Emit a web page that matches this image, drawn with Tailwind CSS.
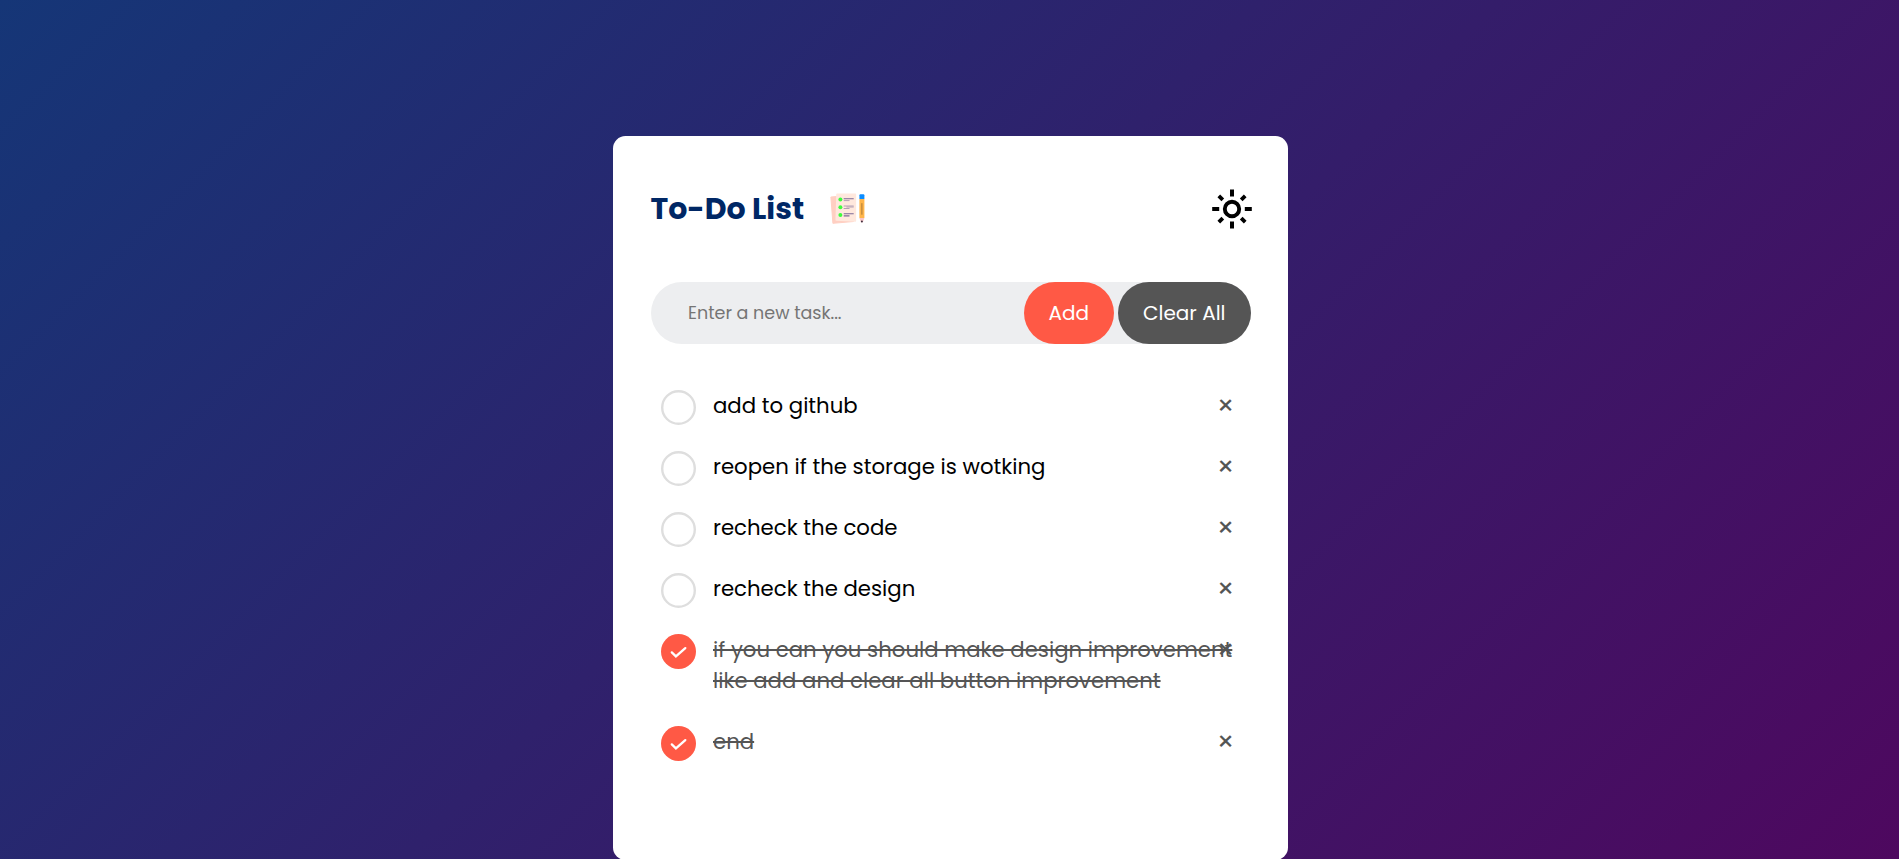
<!DOCTYPE html>
<html lang="en">
<head>
<meta charset="utf-8">
<title>To-Do List</title>
<script src="https://cdn.jsdelivr.net/npm/@tailwindcss/browser@4"></script>
</head>
<body class="h-[859px] overflow-hidden bg-[linear-gradient(135deg,#153677,#4e085f)] pl-[2px] font-[Poppins,Inter,sans-serif]">
<main class="mx-auto mt-[136px] h-[724px] w-[675px] rounded-[12.5px] bg-white px-[37.5px] pt-[50px] pb-[88px]">
  <header class="flex h-[45px] items-center">
    <h1 class="text-[30px] leading-[45px] font-bold text-[#002765]">To-Do List</h1>
    <svg class="mb-[5px] ml-[25px] h-[38px] w-[38px]" viewBox="0 0 38 38">
      <path d="M1.9 10 20 8.5 24.5 34.5 3.9 36.3Z" fill="#ffcfc2" stroke="#ffcfc2" stroke-width="1" stroke-linejoin="round"/>
      <path d="M8 7.2H26.4V34L7.2 33Z" fill="#ffe8dd" stroke="#ffe8dd" stroke-width="1.5" stroke-linejoin="round"/>
      <g fill="#3dfc3d"><circle cx="11.4" cy="12.6" r="2"/><circle cx="11.4" cy="20.2" r="2"/><circle cx="11.4" cy="27.9" r="2"/></g>
      <path d="M14.7 11.7h10M14.7 26.8h10M14.7 28.9h5.8" stroke="#7d6a96" stroke-width="1.1"/>
      <path d="M14.7 13.6h5.8M14.7 19h10M14.7 21.5h5.8M17.4 20h7.3" stroke="#b3a0b4" stroke-width="1"/>
      <path d="M30.4 12h5v19h-5Z" fill="#ffb54a"/>
      <path d="M30.4 8.3a1 1 0 0 1 1-1h3a1 1 0 0 1 1 1v3.8h-5Z" fill="#0a8cff"/>
      <path d="M32.9 16.2v11.5" stroke="#a87838" stroke-width="1"/>
      <path d="M30.4 31h5l-1.5 4.2h-2Z" fill="#f9c6c8"/>
      <circle cx="32.9" cy="34.6" r="1" fill="#403040"/>
    </svg>
    <svg class="-mr-px ml-auto h-10 w-10" viewBox="-20 -20 40 40" fill="none" stroke="#000">
      <circle r="7.2" stroke-width="3.9"/>
      <path stroke-width="4" d="M0-19.5v7M0 12.5v7M-19.8 0h7M12.8 0h7"/>
      <path stroke-width="3.8" d="M-13.2-13.2l4 4M13.2-13.2l-4 4M-13.2 13.2l4-4M13.2 13.2l-4-4"/>
    </svg>
  </header>
  <div class="mt-[51px] flex h-[62px] items-center rounded-full bg-[#edeef0] pl-[37.5px] text-xl text-white">
    <span class="flex-1 text-[17.5px] text-[#757575]">Enter a new task...</span>
    <button class="h-full rounded-full bg-[#ff5945] px-[25px]">Add</button>
    <button class="ml-1 h-full rounded-full bg-[#555] px-[25px]">Clear All</button>
  </div>
  <ul class="mt-[31px] text-[21.25px] leading-[31px] text-black">
    <li class="relative py-[15px] pr-[12px] pl-[62.5px]"><svg class="absolute top-[15px] left-[10px] size-[35px]" viewBox="0 0 35 35"><circle cx="17.5" cy="17.5" r="16.3" fill="none" stroke="#dedede" stroke-width="2.4"/></svg>add to github<b class="absolute top-[6px] right-0 w-[50px] text-center text-[27.5px] leading-[50px] font-normal text-[#555]">×</b></li>
    <li class="relative py-[15px] pr-[12px] pl-[62.5px]"><svg class="absolute top-[15px] left-[10px] size-[35px]" viewBox="0 0 35 35"><circle cx="17.5" cy="17.5" r="16.3" fill="none" stroke="#dedede" stroke-width="2.4"/></svg>reopen if the storage is wotking<b class="absolute top-[6px] right-0 w-[50px] text-center text-[27.5px] leading-[50px] font-normal text-[#555]">×</b></li>
    <li class="relative py-[15px] pr-[12px] pl-[62.5px]"><svg class="absolute top-[15px] left-[10px] size-[35px]" viewBox="0 0 35 35"><circle cx="17.5" cy="17.5" r="16.3" fill="none" stroke="#dedede" stroke-width="2.4"/></svg>recheck the code<b class="absolute top-[6px] right-0 w-[50px] text-center text-[27.5px] leading-[50px] font-normal text-[#555]">×</b></li>
    <li class="relative py-[15px] pr-[12px] pl-[62.5px]"><svg class="absolute top-[15px] left-[10px] size-[35px]" viewBox="0 0 35 35"><circle cx="17.5" cy="17.5" r="16.3" fill="none" stroke="#dedede" stroke-width="2.4"/></svg>recheck the design<b class="absolute top-[6px] right-0 w-[50px] text-center text-[27.5px] leading-[50px] font-normal text-[#555]">×</b></li>
    <li class="relative py-[15px] pr-[12px] pl-[62.5px] text-[#555]"><svg class="absolute top-[15px] left-[10px] size-[35px]" viewBox="0 0 35 35"><circle cx="17.5" cy="17.5" r="17.5" fill="#ff5945"/><path d="M10.8 18.4l4.1 4 9.4-8.3" fill="none" stroke="#fff" stroke-width="2.3" stroke-linecap="round"/></svg><span class="line-through">if you can you should make design improvement like add and clear all button improvement</span><b class="absolute top-[6px] right-0 w-[50px] text-center text-[27.5px] leading-[50px] font-normal">×</b></li>
    <li class="relative py-[15px] pr-[12px] pl-[62.5px] text-[#555]"><svg class="absolute top-[15px] left-[10px] size-[35px]" viewBox="0 0 35 35"><circle cx="17.5" cy="17.5" r="17.5" fill="#ff5945"/><path d="M10.8 18.4l4.1 4 9.4-8.3" fill="none" stroke="#fff" stroke-width="2.3" stroke-linecap="round"/></svg><span class="line-through">end</span><b class="absolute top-[6px] right-0 w-[50px] text-center text-[27.5px] leading-[50px] font-normal">×</b></li>
  </ul>
</main>
</body>
</html>
